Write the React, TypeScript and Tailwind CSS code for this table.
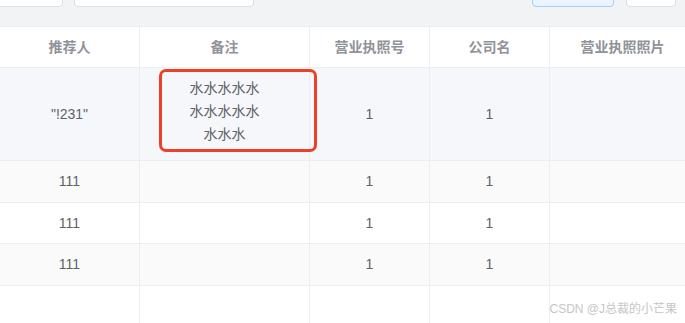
export default function App() {
  const rows = [
    { ref: '"!231"', note: ["水水水水水", "水水水水水", "水水水"], license: "1", company: "1", h: "h-[93px]", bg: "bg-[#f5f7fa]" },
    { ref: "111", note: [], license: "1", company: "1", h: "h-[42px]", bg: "bg-[#fafafa]" },
    { ref: "111", note: [], license: "1", company: "1", h: "h-[41px]", bg: "bg-white" },
    { ref: "111", note: [], license: "1", company: "1", h: "h-[42px]", bg: "bg-[#fafafa]" },
    { ref: "", note: [], license: "", company: "", h: "h-[60px]", bg: "bg-white" },
  ]

  const cell = "flex items-center justify-center border-r border-b border-[#ebeef5] text-center"

  return (
    <div
      className="relative w-[685px] h-[323px] overflow-hidden bg-white text-[14px]"
      style={{ fontFamily: '"Liberation Sans", "Noto Sans CJK SC", sans-serif' }}
    >
      {/* toolbar */}
      <div className="flex items-end h-[26px] bg-[#f2f3f5]">
        <div className="flex items-start self-start w-full">
          <div className="-ml-[40px] -mt-[25px] h-[32px] w-[103px] rounded-[4px] border border-[#dcdfe6] bg-white" />
          <div className="ml-[11px] -mt-[25px] h-[32px] w-[180px] rounded-[4px] border border-[#dcdfe6] bg-white" />
          <div className="ml-auto -mt-[25px] h-[32px] w-[82px] rounded-[4px] border border-[#a0cfff] bg-[#ecf5ff]" />
          <div className="ml-[12px] mr-[9px] -mt-[25px] h-[32px] w-[50px] rounded-[4px] border border-[#dcdfe6] bg-white" />
        </div>
      </div>

      {/* table */}
      <div className="border-t border-[#ebeef5]">
        <div className="grid grid-cols-[140px_170px_120px_120px_146px] h-[41px] bg-white font-bold text-[#909399]">
          <div className={cell}>推荐人</div>
          <div className={cell}>备注</div>
          <div className={cell}>营业执照号</div>
          <div className={cell}>公司名</div>
          <div className={cell}>营业执照照片</div>
        </div>
        {rows.map((r, i) => (
          <div key={i} className={`grid grid-cols-[140px_170px_120px_120px_146px] ${r.h} ${r.bg} text-[#606266]`}>
            <div className={cell}>{r.ref}</div>
            <div className={`${cell} flex-col leading-[23px] pb-[6px]`}>
              {r.note.map((n, j) => (
                <div key={j}>{n}</div>
              ))}
            </div>
            <div className={cell}>{r.license}</div>
            <div className={cell}>{r.company}</div>
            <div className={cell}></div>
          </div>
        ))}
      </div>

      {/* annotation */}
      <div className="absolute left-[159px] top-[69px] w-[158px] h-[83px] rounded-[7px] border-[3px] border-[#ee4026]" />

      <div className="absolute right-[8px] top-[301px] text-[12px] leading-[16px] text-[#c6c6c6] whitespace-nowrap">
        CSDN @J总裁的小芒果
      </div>
    </div>
  )
}
